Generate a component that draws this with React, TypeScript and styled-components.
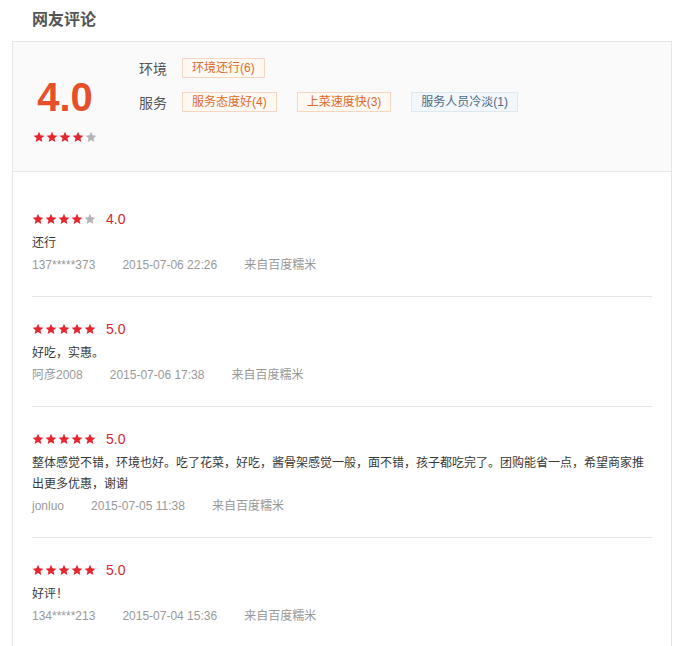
import styled, { createGlobalStyle } from 'styled-components';
import React from 'react';

const GlobalStyle = createGlobalStyle`
  body {
    margin: 0;
    background: #fff;
    font-family: "Liberation Sans", "Noto Sans CJK SC", sans-serif;
    font-size: 12px;
    color: #333;
  }
`;

const Page = styled.section`
  width: 660px;
  padding: 9px 0 0 12px;
`;

const Title = styled.h2`
  margin: 0 0 10px 20px;
  font-size: 16px;
  line-height: 22px;
  font-weight: bold;
  color: #555;
`;

const Box = styled.div`
  border: 1px solid #e6e6e6;
  border-bottom: none;
`;

const Summary = styled.div`
  display: flex;
  height: 129px;
  background: #fafafa;
  border-bottom: 1px solid #e8e8e8;
`;

const ScoreCol = styled.div`
  width: 104px;
  display: flex;
  flex-direction: column;
  align-items: center;
  padding-top: 33px;
  box-sizing: border-box;
  > .num {
    font-size: 40px;
    line-height: 44px;
    font-weight: bold;
    color: #e5502a;
  }
  > .stars {
    margin-top: 12px;
  }
`;

const TagCol = styled.div`
  padding: 16px 0 0 22px;
  display: flex;
  flex-direction: column;
  gap: 14px;
`;

const TagRow = styled.div`
  display: flex;
  align-items: center;
  gap: 20px;
  > .label {
    white-space: nowrap;
    font-size: 14px;
    color: #555;
    margin-right: -5px;
  }
`;

const Tag = styled.span<{ $neg?: boolean }>`
  display: inline-block;
  white-space: nowrap;
  height: 20px;
  line-height: 18px;
  box-sizing: border-box;
  padding: 0 9px;
  font-size: 12px;
  border: 1px solid ${p => (p.$neg ? '#dde9f1' : '#f6d6c0')};
  background: ${p => (p.$neg ? '#f1f7fb' : '#fff9f4')};
  color: ${p => (p.$neg ? '#4c6b86' : '#e06a2a')};
`;

const List = styled.div`
  padding: 15px 19px 0 19px;
`;

const Review = styled.div`
  padding: 24px 0 20px;
  border-bottom: 1px solid #e5e5e5;
  &:last-child {
    border-bottom: none;
  }
`;

const RateRow = styled.div`
  display: flex;
  align-items: center;
  height: 16px;
  > .score {
    margin-left: 10px;
    font-size: 14px;
    color: #d9262c;
  }
`;

const Text = styled.p`
  margin: 6px 0 0;
  font-size: 12px;
  line-height: 21px;
  color: #383838;
`;

const Meta = styled.div`
  display: flex;
  gap: 27px;
  font-size: 12px;
  line-height: 22px;
  color: #999;
`;

const StarWrap = styled.span`
  display: inline-flex;
  gap: 1px;
`;

const Star: React.FC<{ on: boolean }> = ({ on }) => (
  <svg width="12" height="12" viewBox="0 0 24 24">
    <path
      d="M12 1.5l3.1 7.1 7.7.7-5.8 5.1 1.7 7.6L12 18l-6.7 4 1.7-7.6-5.8-5.1 7.7-.7z"
      fill={on ? '#e3262f' : '#b4b4b8'}
    />
  </svg>
);

const Stars: React.FC<{ n: number; className?: string }> = ({ n, className }) => (
  <StarWrap className={className}>
    {[0, 1, 2, 3, 4].map(i => (
      <Star key={i} on={i < n} />
    ))}
  </StarWrap>
);

const reviews = [
  { n: 4, score: '4.0', text: '还行', user: '137*****373', time: '2015-07-06 22:26' },
  { n: 5, score: '5.0', text: '好吃，实惠。', user: '阿彦2008', time: '2015-07-06 17:38' },
  {
    n: 5,
    score: '5.0',
    text: '整体感觉不错，环境也好。吃了花菜，好吃，酱骨架感觉一般，面不错，孩子都吃完了。团购能省一点，希望商家推出更多优惠，谢谢',
    user: 'jonluo',
    time: '2015-07-05 11:38',
  },
  { n: 5, score: '5.0', text: '好评！', user: '134*****213', time: '2015-07-04 15:36' },
];

export default function App() {
  return (
    <Page>
      <GlobalStyle />
      <Title>网友评论</Title>
      <Box>
        <Summary>
          <ScoreCol>
            <div className="num">4.0</div>
            <Stars n={4} className="stars" />
          </ScoreCol>
          <TagCol>
            <TagRow>
              <span className="label">环境</span>
              <Tag>环境还行(6)</Tag>
            </TagRow>
            <TagRow>
              <span className="label">服务</span>
              <Tag>服务态度好(4)</Tag>
              <Tag>上菜速度快(3)</Tag>
              <Tag $neg>服务人员冷淡(1)</Tag>
            </TagRow>
          </TagCol>
        </Summary>
        <List>
          {reviews.map(r => (
            <Review key={r.time}>
              <RateRow>
                <Stars n={r.n} />
                <span className="score">{r.score}</span>
              </RateRow>
              <Text>{r.text}</Text>
              <Meta>
                <span>{r.user}</span>
                <span>{r.time}</span>
                <span>来自百度糯米</span>
              </Meta>
            </Review>
          ))}
        </List>
      </Box>
    </Page>
  );
}
